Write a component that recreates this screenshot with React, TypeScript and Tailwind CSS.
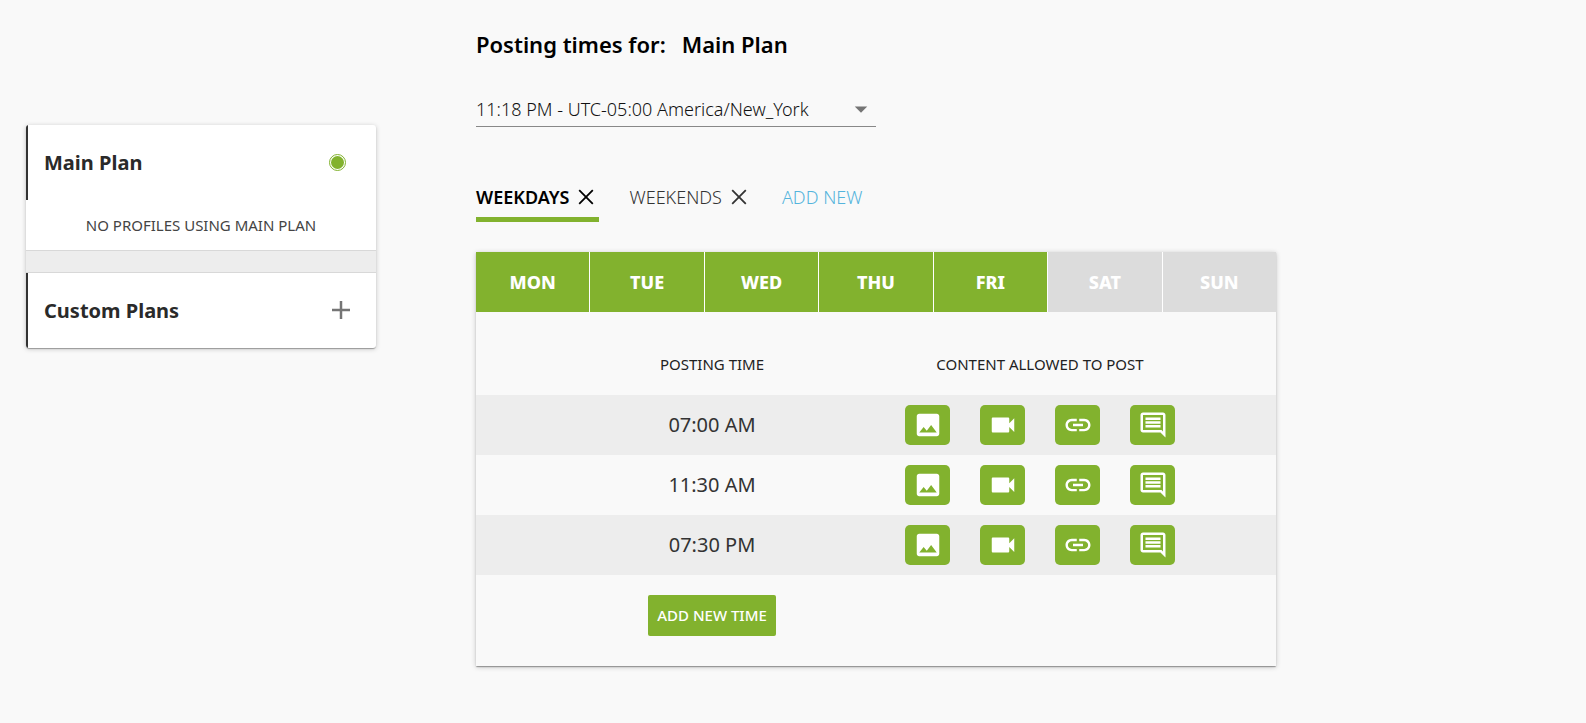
import { useState } from "react";
import { MdArrowDropDown, MdImage, MdLink, MdOutlineComment, MdVideocam } from "react-icons/md";

const days = [
  { name: "MON", active: true },
  { name: "TUE", active: true },
  { name: "WED", active: true },
  { name: "THU", active: true },
  { name: "FRI", active: true },
  { name: "SAT", active: false },
  { name: "SUN", active: false },
];

const times = ["07:00 AM", "11:30 AM", "07:30 PM"];

const contentTypes = [
  { label: "Images", Icon: MdImage },
  { label: "Videos", Icon: MdVideocam },
  { label: "Links", Icon: MdLink },
  { label: "Text", Icon: MdOutlineComment },
];

const cardShadow =
  "shadow-[0_1px_5px_0_rgba(0,0,0,0.22),0_1px_1px_0_rgba(0,0,0,0.18),0_2px_1px_-1px_rgba(0,0,0,0.14)]";

function CloseIcon() {
  return (
    <svg viewBox="0 0 16 16" className="size-4" fill="none" stroke="currentColor" strokeWidth="1.8" aria-hidden="true">
      <path d="M1.2 1.2l13.6 13.6M14.8 1.2l-13.6 13.6" />
    </svg>
  );
}

function Sidebar() {
  return (
    <aside className={`w-[350px] shrink-0 overflow-hidden rounded-[3px] bg-white ${cardShadow}`}>
      <div className="flex h-[75px] items-center justify-between border-l-2 border-[#333] pr-[30px] pl-4">
        <h2 className="text-xl font-bold text-[#2a2a2a]">Main Plan</h2>
        <span className="flex size-[17px] items-center justify-center rounded-full border border-[#82b22e]">
          <span className="size-[13px] rounded-full bg-[#82b22e]" />
        </span>
      </div>
      <p className="flex h-[50px] items-center justify-center text-[15px] text-[#444]">
        NO PROFILES USING MAIN PLAN
      </p>
      <div className="h-[23px] border-y border-[#d8d8d8] bg-[#ededed]" />
      <div className="flex h-[75px] items-center justify-between border-l-2 border-[#333] pr-[26px] pl-4">
        <h2 className="text-xl font-bold text-[#2a2a2a]">Custom Plans</h2>
        <button type="button" aria-label="Add custom plan" className="pb-px text-[#757575]">
          <svg viewBox="0 0 18 18" className="size-[18px]" stroke="currentColor" strokeWidth="2.5" aria-hidden="true">
            <path d="M9 0v18M0 9h18" />
          </svg>
        </button>
      </div>
    </aside>
  );
}

function Tabs() {
  const [active, setActive] = useState("WEEKDAYS");
  return (
    <nav className="mt-[50px] flex gap-[30px] text-lg">
      {["WEEKDAYS", "WEEKENDS"].map((name) => (
        <div
          key={name}
          className={`flex h-[45px] items-start gap-[9px] border-b-5 pr-[5px] ${
            active === name
              ? "border-[#82b22e] font-semibold text-black"
              : "border-transparent font-light text-[#333]"
          }`}
        >
          <button type="button" className="leading-10" onClick={() => setActive(name)}>
            {name}
          </button>
          <button type="button" aria-label={`Remove ${name}`} className="flex h-10 items-center">
            <CloseIcon />
          </button>
        </div>
      ))}
      <button type="button" className="h-10 leading-10 font-light text-[#54b4dc]">
        ADD NEW
      </button>
    </nav>
  );
}

function Schedule() {
  return (
    <section className={`mt-[30px] pb-[30px] ${cardShadow}`}>
      <div className="grid grid-cols-7 gap-px bg-white">
        {days.map((day) => (
          <button
            key={day.name}
            type="button"
            aria-pressed={day.active}
            className={`h-[60px] text-lg font-extrabold text-white ${
              day.active ? "bg-[#82b22e]" : "bg-[#dcdcdc]"
            }`}
          >
            {day.name}
          </button>
        ))}
      </div>
      <table className="mt-[22px] w-full table-fixed">
        <colgroup>
          <col className="w-[9%]" />
          <col className="w-[41%]" />
          <col className="w-[41%]" />
          <col className="w-[9%]" />
        </colgroup>
        <thead>
          <tr className="h-[61px] text-[15px] text-[#222]">
            <td />
            <th scope="col" className="font-normal">POSTING TIME</th>
            <th scope="col" className="font-normal">CONTENT ALLOWED TO POST</th>
            <td />
          </tr>
        </thead>
        <tbody>
          {times.map((time) => (
            <tr key={time} className="h-[60px] odd:bg-[#ededed]">
              <td />
              <td className="text-center text-xl text-[#333]">{time}</td>
              <td>
                <div className="flex justify-center gap-[30px]">
                  {contentTypes.map(({ label, Icon }) => (
                    <button
                      key={label}
                      type="button"
                      aria-label={label}
                      className="flex h-10 w-[45px] items-center justify-center rounded-[5px] bg-[#82b22e] text-white"
                    >
                      <Icon className="size-[30px]" />
                    </button>
                  ))}
                </div>
              </td>
              <td />
            </tr>
          ))}
        </tbody>
        <tfoot>
          <tr>
            <td />
            <td className="pt-5 text-center">
              <button
                type="button"
                className="h-[41px] rounded-xs bg-[#82b22e] px-[9px] align-top text-[15px] font-medium text-white"
              >
                ADD NEW TIME
              </button>
            </td>
            <td />
            <td />
          </tr>
        </tfoot>
      </table>
    </section>
  );
}

export default function App() {
  return (
    <div className="flex min-h-screen items-start gap-[100px] bg-[#f9f9f9] px-[26px] font-['Noto_Sans',sans-serif]">
      <div className="pt-[125px]">
        <Sidebar />
      </div>
      <main className="w-full max-w-[800px] pt-6 pb-10">
        <h1 className="flex gap-4 text-[22px] leading-10 font-semibold text-black">
          <span>Posting times for:</span>
          <span>Main Plan</span>
        </h1>
        <div className="mt-[26px] grid w-full max-w-[400px] items-center border-b border-[#888] pt-0.5">
          <select
            aria-label="Time zone"
            className="col-start-1 row-start-1 h-[34px] w-full appearance-none bg-transparent text-lg font-light text-[#111] outline-none"
          >
            <option>11:18 PM - UTC-05:00 America/New_York</option>
          </select>
          <MdArrowDropDown className="pointer-events-none col-start-1 row-start-1 size-[30px] justify-self-end text-[#757575]" />
        </div>
        <Tabs />
        <Schedule />
      </main>
    </div>
  );
}
